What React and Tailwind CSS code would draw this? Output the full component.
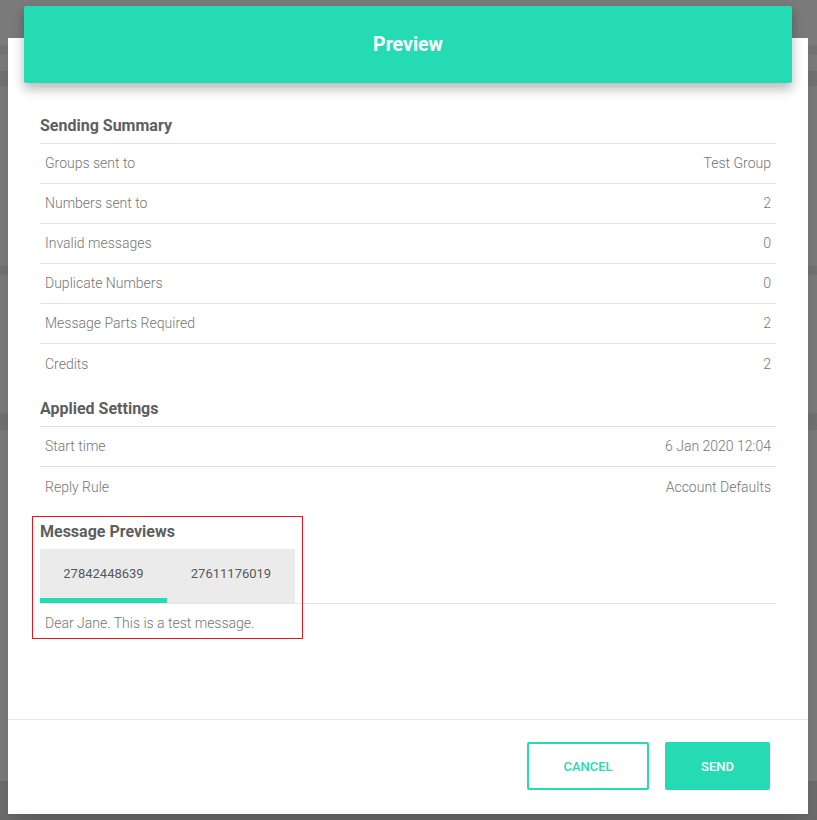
import React from 'react';

const summary = [
  ['Groups sent to', 'Test Group'],
  ['Numbers sent to', '2'],
  ['Invalid messages', '0'],
  ['Duplicate Numbers', '0'],
  ['Message Parts Required', '2'],
  ['Credits', '2'],
];

const settings = [
  ['Start time', '6 Jan 2020 12:04'],
  ['Reply Rule', 'Account Defaults'],
];

function Section({ title, rows }) {
  return (
    <div>
      <h3 className="text-[16px] leading-5 font-bold text-[#5e5e5e] pb-[7px] border-b border-[#e2e2e2]">{title}</h3>
      {rows.map(([label, value], i) => (
        <div
          key={label}
          className={`h-10 flex items-center justify-between px-[5px] text-[14px] font-light text-[#757575] ${i < rows.length - 1 ? 'border-b border-[#e2e2e2]' : ''}`}
        >
          <span>{label}</span>
          <span>{value}</span>
        </div>
      ))}
    </div>
  );
}

export default function App() {
  return (
    <div className="relative w-full h-[820px] bg-[#7a7a7a] overflow-hidden" style={{ fontFamily: 'Roboto, "Liberation Sans", sans-serif' }}>
      {/* dimmed page underneath the overlay */}
      <div className="absolute inset-x-0 top-[71px] h-[15px] bg-[#717171]" />
      <div className="absolute inset-x-0 top-[45px] h-[10px] bg-[#727272]" />
      <div className="absolute inset-x-0 top-[266px] h-[9px] bg-[#727272]" />
      <div className="absolute inset-x-0 top-[413px] h-[17px] bg-[#717171]" />
      <div className="absolute inset-x-0 top-[781px] bottom-0 bg-[#6c6c6c]" />

      <div className="relative ml-2 mt-[38px] w-[800px] h-[776px] bg-white flex flex-col shadow-xl">
        <div className="mx-4 -mt-[32px] h-[77px] bg-[#25dbb3] rounded-[2px] shadow-[0_6px_12px_rgba(0,0,0,0.28)] flex items-center justify-center">
          <span className="text-white text-[19.5px] font-bold">Preview</span>
        </div>

        <div className="px-8 pt-[33px] flex flex-col gap-[15px] flex-1">
          <Section title="Sending Summary" rows={summary} />
          <Section title="Applied Settings" rows={settings} />

          <div className="relative">
            <h3 className="text-[16px] leading-5 font-bold text-[#5e5e5e] pb-[7px]">Message Previews</h3>
            <div className="border-b border-[#e4e4e4]">
              <div className="flex w-[255px] h-[54px] bg-[#ebebeb]">
                <div className="w-[127px] flex flex-col">
                  <div className="flex-1 flex items-center justify-center text-[13px] text-[#595959]">27842448639</div>
                  <div className="h-[5px] bg-[#25dbb3]" />
                </div>
                <div className="w-[128px] flex flex-col">
                  <div className="flex-1 flex items-center justify-center text-[13px] text-[#595959]">27611176019</div>
                  <div className="h-[5px]" />
                </div>
              </div>
            </div>
            <div className="h-[38px] flex items-center px-[5px] text-[14px] font-light text-[#757575]">Dear Jane. This is a test message.</div>
            <div className="absolute -left-2 -top-[6px] w-[271px] h-[123px] border border-[#e8141e] pointer-events-none" />
          </div>
        </div>

        <div className="h-[95px] border-t border-[#e8e8e8] flex items-start justify-end gap-4 pt-[22px] pr-[38px]">
          <button className="w-[122px] h-12 border-2 border-[#25dbb3] rounded-[2px] text-[#25dbb3] text-[13px] font-medium pt-[2px]">CANCEL</button>
          <button className="w-[105px] h-12 bg-[#25dbb3] rounded-[2px] text-white text-[13px] font-medium pt-[2px]">SEND</button>
        </div>
      </div>
    </div>
  );
}
